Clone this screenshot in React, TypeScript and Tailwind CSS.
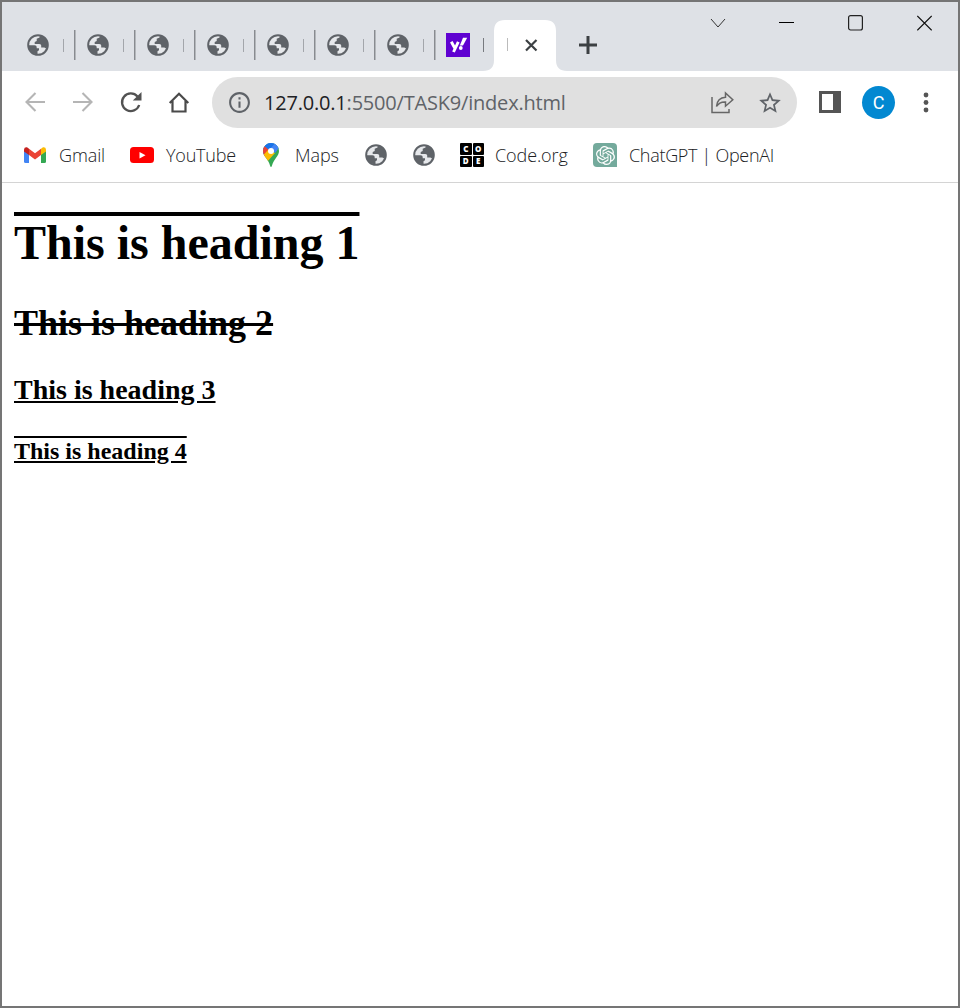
import React from "react";
import { SiOpenai } from "react-icons/si";
import { MdStarBorder, MdInfoOutline } from "react-icons/md";

const sans = "font-['Open_Sans','Noto_Sans',sans-serif]";

function Globe() {
  return (
    <svg className="h-[22px] w-[22px] shrink-0" viewBox="0 0 22 22">
      <circle cx="11" cy="11" r="9.8" fill="#e6e8eb" stroke="#5f6368" strokeWidth="2" />
      <path
        fill="#5f6368"
        d="M13 1.5 12.5 3.5 9.700 4.800v2.100L7.700 8.100v2h4.500c1.400 0 2 .8 2 1.700v1.600h3.100l1.900 1.200c1.500-1.900 1.800-4.400 1.100-6.700C19 4.400 16.300 2 13 1.500z"
      />
      <path
        fill="#5f6368"
        d="M1.300 11.200h6.200c1.500 0 2.200.8 2.200 2.200v.9H12v1.900l-1.500 1.100v2.900c-4.900.2-8.800-3.700-9.200-9z"
      />
    </svg>
  );
}

function InactiveTab() {
  return (
    <div className="flex h-[30px] w-[60px] shrink-0 items-center border-r border-[#888b90] pl-3 shadow-[1px_0_0_#b4b7bb]">
      <Globe />
      <div className="ml-[14px] h-[13px] w-px bg-[#a3a6ab]" />
    </div>
  );
}

function TabStrip() {
  return (
    <div className="flex h-[69px] bg-[#dee1e6] pl-[13px]">
      <div className="mt-[28px] flex h-[30px] items-center">
        {[0, 1, 2, 3, 4, 5, 6].map((n) => (
          <InactiveTab key={n} />
        ))}
        <div className="flex w-[48px] items-center pl-[11px]">
          <svg className="h-6 w-6 shrink-0" viewBox="0 0 24 24">
            <rect width="24" height="24" fill="#5f01d1" />
            <path d="M5.300 8.800 9 15.500M12.300 8.800 7.500 19" stroke="#fff" strokeWidth="2.900" fill="none" />
            <path d="M17 4.700h4.200L17 12.500h-3.200z" fill="#fff" />
            <circle cx="14.800" cy="15" r="1.900" fill="#fff" />
          </svg>
          <div className="ml-[13px] h-[14px] w-px shrink-0 bg-[#777a7f]" />
        </div>
      </div>
      <div className="flex h-[69px] w-[84px] items-end">
        <svg className="h-[51px] w-[84px]" viewBox="0 0 84 51">
          <path d="M0 51Q11 51 11 40V11Q11 0 22 0H62Q73 0 73 11V40Q73 51 84 51Z" fill="#fff" />
          <path d="M24.500 18V31" stroke="#bbb" />
          <path d="m43 20 10.500 10.500m0-10.500L43 30.500" stroke="#3c4043" strokeWidth="2.200" />
        </svg>
      </div>
      <svg className="ml-[12px] mt-[34px] h-[18px] w-[18px]" viewBox="0 0 18 18">
        <path d="M9 0v18M0 9h18" stroke="#3c4043" strokeWidth="3" />
      </svg>
      <svg className="ml-[113px] mt-[13px] h-[16px] w-[16px]" viewBox="0 0 16 16">
        <path d="m1 4 7 8 7-8" stroke="#333" fill="none" />
      </svg>
      <svg className="ml-[53px] mt-[13px] h-4 w-[15px]" viewBox="0 0 15 16">
        <path d="M0 7.500h15" stroke="#000" />
      </svg>
      <svg className="ml-[54px] mt-[13px] h-4 w-[15px]" viewBox="0 0 15 16">
        <rect x=".6" y=".6" width="13.800" height="14.400" rx="2" stroke="#222" fill="none" strokeWidth="1.200" />
      </svg>
      <svg className="ml-[54px] mt-[13px] h-4 w-[15px]" viewBox="0 0 15 16">
        <path d="m.3 1 14.400 14.400m0-14.400L.3 15.400" stroke="#111" strokeWidth="1.200" />
      </svg>
    </div>
  );
}

function Toolbar() {
  return (
    <div className="mt-[6px] flex h-[51px] items-center pl-[22px]">
      <svg className="h-[22px] w-[22px] shrink-0" viewBox="0 0 22 22" fill="none" stroke="#b5b5b5" strokeWidth="2.100">
        <path d="M21 10H2.500M11.500 1l-9 9 9 9" />
      </svg>
      <svg className="ml-[26px] h-[22px] w-[22px] shrink-0" viewBox="0 0 22 22" fill="none" stroke="#b5b5b5" strokeWidth="2.100">
        <path d="M1 10h18.500M10.500 1l9 9-9 9" />
      </svg>
      <svg className="ml-[26px] h-[22px] w-[22px] shrink-0" viewBox="0 0 22 22">
        <path d="M17.500 4.500A8.800 8.800 0 1 0 19.200 13" fill="none" stroke="#525252" strokeWidth="2.300" />
        <path d="M21.500 0v8.500h-8.700z" fill="#525252" />
      </svg>
      <svg className="ml-[26px] h-[22px] w-[22px] shrink-0" viewBox="0 0 22 22">
        <path d="M1.700 11 11 1.800l9.300 9.200M4.500 9v10.500h13V9" fill="none" stroke="#4a4a4a" strokeWidth="2.200" />
      </svg>
      <div className="ml-[22px] flex h-[51px] w-[585px] shrink-0 items-center rounded-full bg-[#e0e0e0] pl-[15px]">
        <MdInfoOutline className="h-[25px] w-[25px] shrink-0 text-[#5f6368]" />
        <div className={`ml-[12px] w-[446px] shrink-0 whitespace-nowrap text-[20px] leading-6 tracking-[-0.200px] text-[#5f6368] ${sans}`}>
          <span className="text-[#202124]">127.0.0.1</span>:5500/TASK9/index.html
        </div>
        <svg className="ml-px h-[23px] w-[23px] shrink-0" viewBox="0 0 23 23" fill="none" stroke="#666" strokeWidth="1.500">
          <path d="M1 6v15.500h17V18" />
          <path d="M5.500 15.500C6 10 9 6.500 14.500 6.300V2l7.300 6.800-7.300 6.400v-4.300C10.500 10.700 7.500 12 5.500 15.500z" />
        </svg>
        <MdStarBorder className="ml-[23px] h-[26px] w-[26px] shrink-0 text-[#5f6368]" />
      </div>
      <svg className="ml-[22px] h-[22px] w-[22px] shrink-0 -translate-y-px" viewBox="0 0 22 22">
        <path fill="#555" d="M0 0h22v22H0zM3 3v16h11V3z" fillRule="evenodd" />
      </svg>
      <div className="ml-[21px] flex h-[33px] w-[33px] shrink-0 items-center justify-center rounded-full bg-[#0288d1] font-[Roboto] text-[18px] leading-none text-white">
        C
      </div>
      <svg className="ml-[28px] h-[22px] w-[6px] shrink-0" viewBox="0 0 6 22" fill="#555">
        <circle cx="3" cy="3" r="2.400" />
        <circle cx="3" cy="10.500" r="2.400" />
        <circle cx="3" cy="18" r="2.400" />
      </svg>
    </div>
  );
}

const label = `shrink-0 whitespace-nowrap pb-px text-[18px] font-light leading-6 text-[#202124] ${sans}`;

function Bookmarks() {
  return (
    <div className="flex h-[55px] items-center border-b border-[#d4d4d4] pl-[22px]">
      <svg className="h-4 w-[22px] shrink-0" viewBox="0 0 22 16">
        <path d="M0 3h5v13H1.500Q0 16 0 14.500z" fill="#4285f4" />
        <path d="M17 3h5v11.500q0 1.500-1.500 1.500H17z" fill="#34a853" />
        <path d="M0 2.500Q.2-.2 3 .2l2 1.500V8L0 4.500z" fill="#c5221f" />
        <path d="M22 2.500Q21.800-.2 19 .2l-2 1.500V8l5-3.500z" fill="#fbbc04" />
        <path d="m5 1.700 6 4.500 6-4.500V8l-6 4.500L5 8z" fill="#ea4335" />
      </svg>
      <span className={`${label} ml-[13px] w-[46px] tracking-[-0.100px]`}>Gmail</span>
      <svg className="ml-[25px] h-4 w-6 shrink-0" viewBox="0 0 24 16">
        <rect width="24" height="16" rx="3.500" fill="#f00" />
        <path d="m9.500 5 6 3.200-6 3.300z" fill="#fff" />
      </svg>
      <span className={`${label} ml-3 w-[69px] tracking-[-0.200px]`}>YouTube</span>
      <svg className="ml-[28px] h-6 w-4 shrink-0" viewBox="0 0 16 24">
        <clipPath id="pin">
          <path d="M8 0a8 8 0 0 0-8 8c0 5 5 7.500 7 14.500q1 3 2 0c2-7 7-9.500 7-14.500a8 8 0 0 0-8-8z" />
        </clipPath>
        <g clipPath="url(#pin)">
          <path d="M0 0h16v24H0z" fill="#34a853" />
          <path d="M0 12 8 7l4-5 4 3V0H0z" fill="#4285f4" />
          <path d="M1.500 3 8 8l-7.500 9L-2 8z" fill="#ea4335" />
          <path d="M0 12.500 5 7l7 3L4 19z" fill="#fbbc04" />
          <path d="M1.500 3Q6-2 12 1L6 7z" fill="#1a73e8" />
          <path d="M12 .5 16 5l-4 5-5-4z" fill="#4285f4" />
        </g>
        <circle cx="8" cy="8" r="3" fill="#fff" />
      </svg>
      <span className={`${label} ml-4 w-[44px] tracking-[-0.100px]`}>Maps</span>
      <div className="ml-[26px] flex gap-[26px]">
        <Globe />
        <Globe />
      </div>
      <div className="ml-[25px] grid h-6 w-6 shrink-0 grid-cols-2 gap-px font-['Open_Sans',sans-serif] text-[8px] font-extrabold leading-none text-white">
        {["C", "O", "D", "E"].map((c) => (
          <span key={c} className="flex items-center justify-center rounded-[1px] bg-black">
            {c}
          </span>
        ))}
      </div>
      <span className={`${label} ml-[11px] w-[74px] tracking-[-0.100px]`}>Code.org</span>
      <div className="ml-6 flex h-6 w-6 shrink-0 items-center justify-center rounded-[4px] rounded-br-none bg-[#74aa9c]">
        <SiOpenai className="h-[19px] w-[19px] text-white" />
      </div>
      <span className={`${label} ml-3 tracking-[-0.300px]`}>ChatGPT | OpenAI</span>
    </div>
  );
}

export default function App() {
  return (
    <div className="flex h-[1008px] w-[960px] flex-col overflow-hidden border-2 border-[#757575] bg-white">
      <TabStrip />
      <Toolbar />
      <Bookmarks />
      <main className="pl-3 pt-[32px] font-['Liberation_Serif',serif] font-bold text-black">
        <h1 className="text-[48px] leading-[56px] overline">This is heading 1</h1>
        <h2 className="mt-[32px] text-[36px] leading-[40px] line-through">This is heading 2</h2>
        <h3 className="mt-[31px] text-[28px] leading-[32px] underline">This is heading 3</h3>
        <h4 className="mt-[31px] text-[24px] leading-[28px] [text-decoration-line:underline_overline]">This is heading 4</h4>
      </main>
    </div>
  );
}
